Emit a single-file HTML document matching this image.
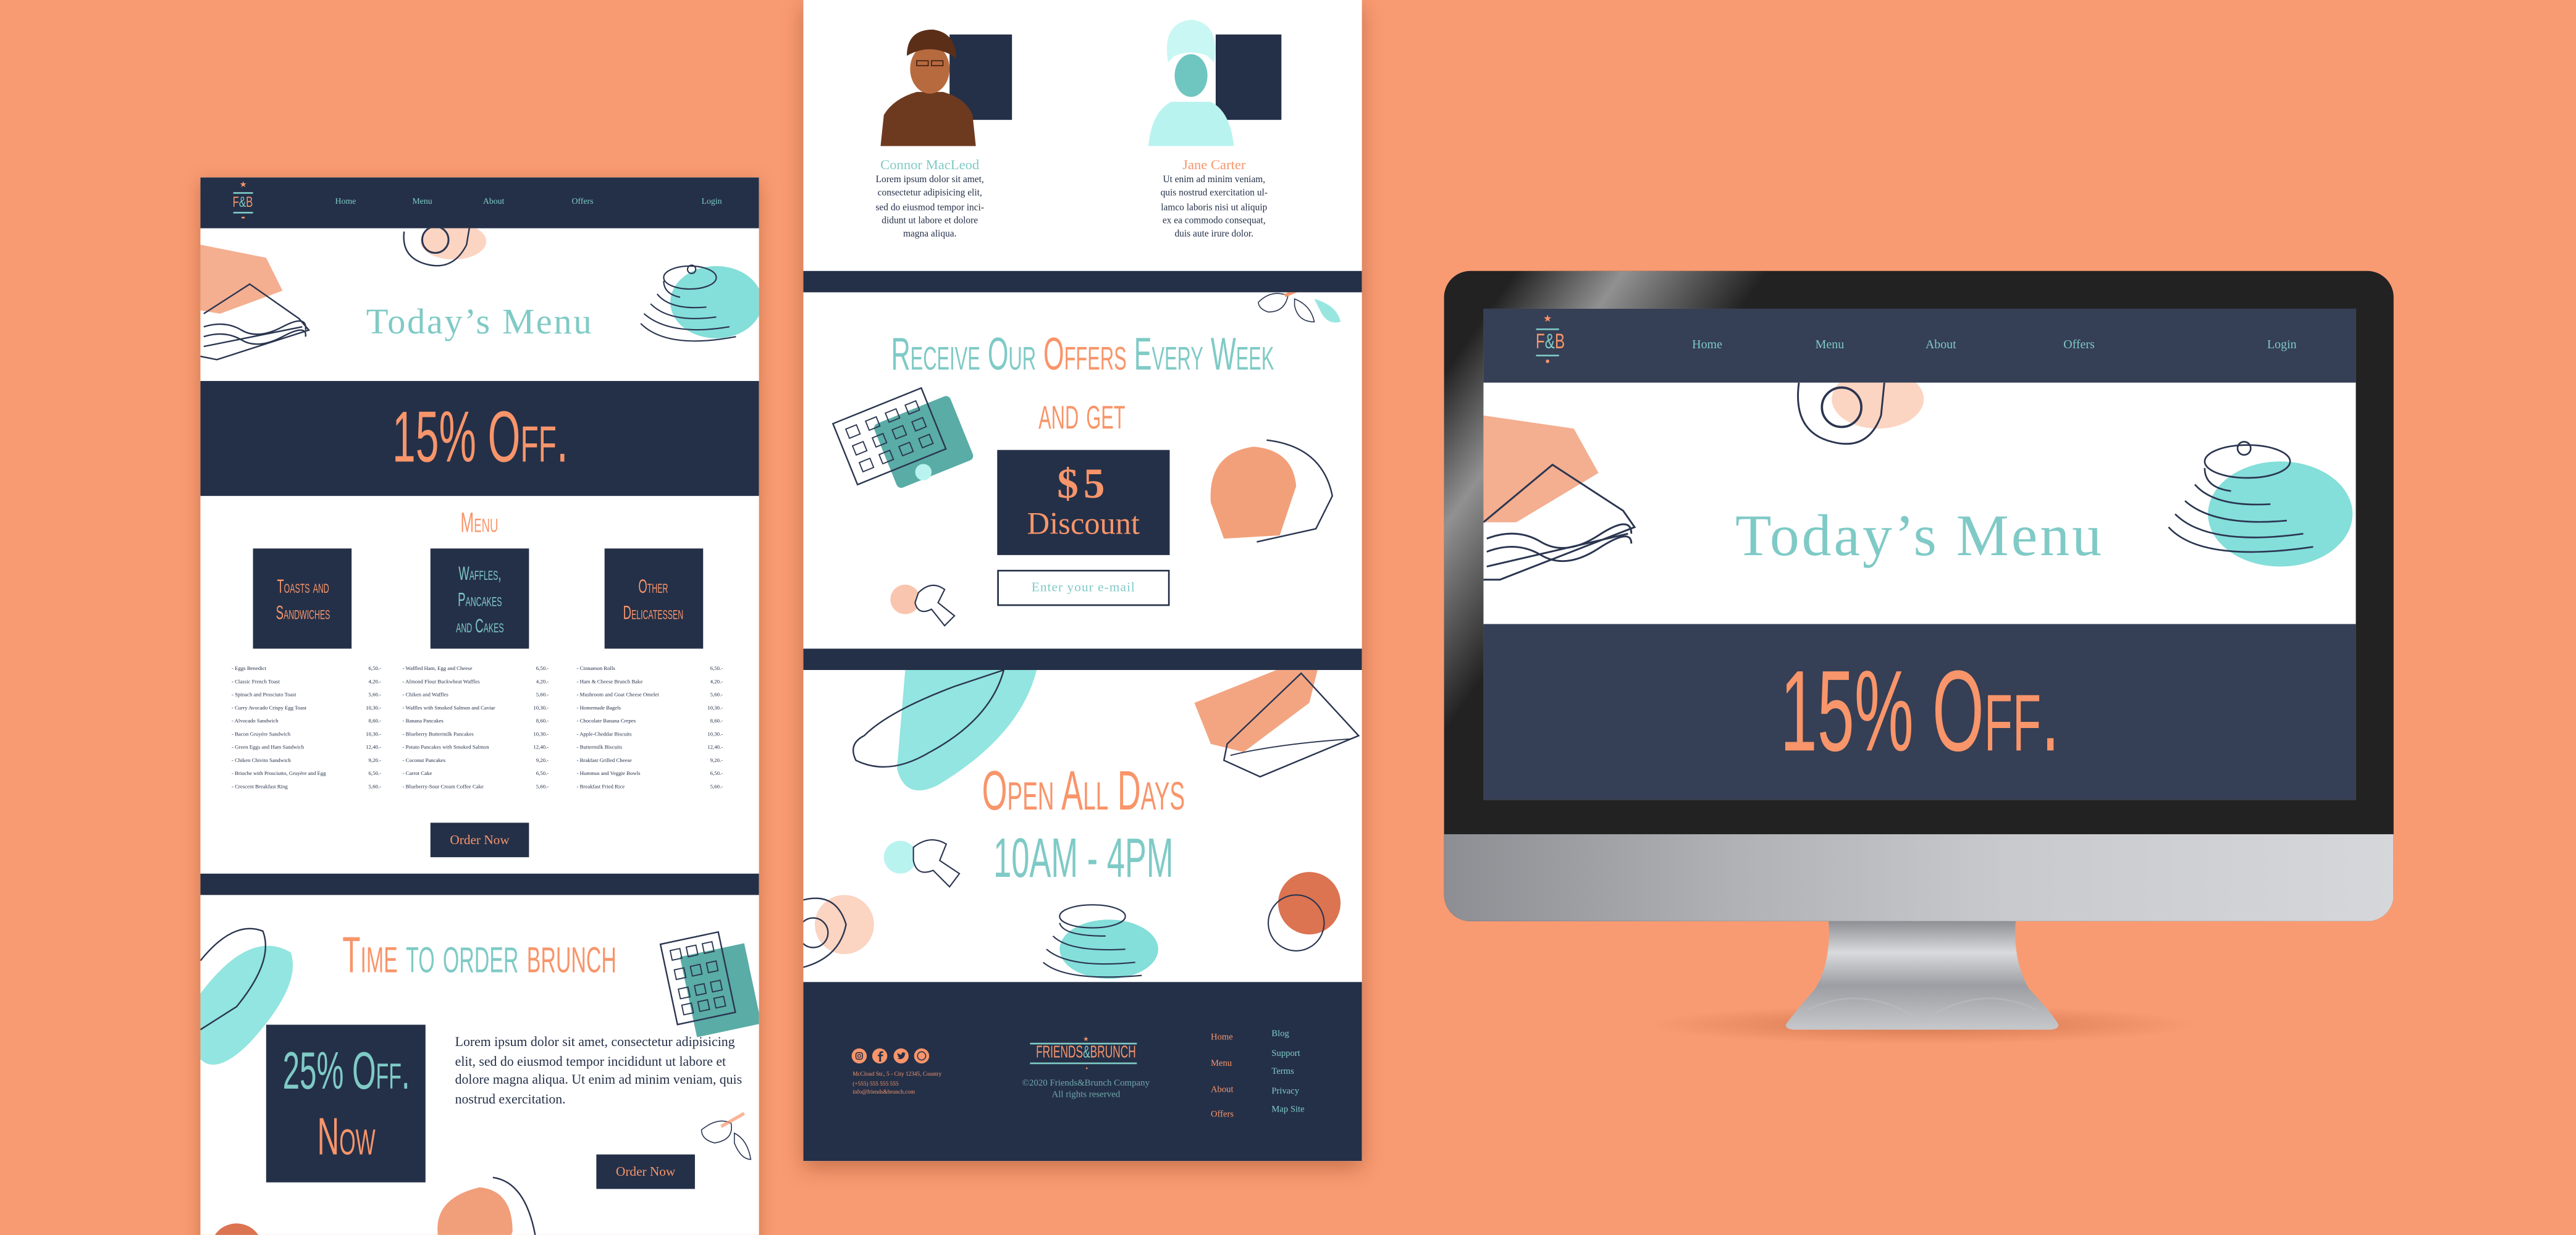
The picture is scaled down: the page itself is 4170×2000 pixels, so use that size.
<!DOCTYPE html>
<html><head><meta charset="utf-8">
<style>
html,body{margin:0;padding:0;}
body{width:4170px;height:2000px;overflow:hidden;background:#f99b72;}
#s{position:absolute;left:0;top:0;width:1568px;height:752px;transform:scale(2.6594);transform-origin:0 0;background:#f99b72;overflow:hidden;}
.a{position:absolute;}
.navy{background:#243048;}
.serif{font-family:"Liberation Serif",serif;}
.hand{font-family:"Liberation Sans",sans-serif;font-variant:small-caps;white-space:nowrap;}
.sq{display:inline-block;transform:scaleX(.58);transform-origin:50% 50%;white-space:nowrap;}
.teal{color:#7fcac6;}
.or{color:#f8956a;}
.c{text-align:center;}
.nav{font-family:"Liberation Serif",serif;font-size:5.2px;color:#7fcac6;}
.list{font-family:"Liberation Serif",serif;font-size:3.3px;color:#243048;line-height:8.05px;white-space:nowrap;}
.box{background:#243048;display:flex;align-items:center;justify-content:center;text-align:center;}
</style></head><body>
<div id="s">

<!-- ================= LEFT PANEL ================= -->
<div class="a" style="left:122px;top:108px;width:340px;height:660px;background:#fff;box-shadow:0 3px 10px rgba(120,50,20,.35);overflow:hidden;">
  <div class="a navy" style="left:0;top:0;width:340px;height:31px;"></div>
  <div class="a" style="left:16px;top:3px;width:20px;height:26px;">
    <div class="a or c" style="left:0;top:0;width:20px;font-size:5px;line-height:5px;">★</div>
    <div class="a" style="left:4px;top:6px;width:12px;height:.8px;background:#7fcac6;"></div>
    <div class="a c" style="left:0;top:7px;width:20px;font-family:'Liberation Sans',sans-serif;font-size:9px;line-height:10px;"><span class="sq" style="transform:scaleX(.7)"><span class="or">F</span><span class="teal">&amp;</span><span class="or">B</span></span></div>
    <div class="a" style="left:4px;top:18px;width:12px;height:.8px;background:#7fcac6;"></div>
    <div class="a" style="left:9.3px;top:20.5px;width:1.4px;height:1.4px;border-radius:50%;background:#f8956a;"></div>
  </div>
  <div class="a nav" style="left:82px;top:12px;">Home</div>
  <div class="a nav" style="left:129px;top:12px;">Menu</div>
  <div class="a nav" style="left:172px;top:12px;">About</div>
  <div class="a nav" style="left:226px;top:12px;">Offers</div>
  <div class="a nav or" style="left:305px;top:12px;">Login</div>

  <svg class="a" style="left:0;top:31px;" width="340" height="93" viewBox="0 0 340 93">
    <polygon points="0,10 40,18 50,38 12,52 0,50" fill="#f2a07c" opacity=".85"/>
    <g stroke="#2a3550" stroke-width=".9" fill="none">
      <path d="M2,52 L30,34 L60,55 L66,62 L10,80 L0,78"/>
      <path d="M2,60 Q15,56 25,62 T50,60 T64,62"/>
      <path d="M2,66 Q15,62 25,68 T50,66 T64,66"/>
      <path d="M2,72 L62,60"/>
    </g>
    <g transform="translate(124,0)">
      <ellipse cx="30" cy="8" rx="20" ry="11" fill="#f8b79a" opacity=".6"/>
      <path d="M0,2 Q-2,18 14,22 Q30,26 38,10 L40,-2" stroke="#2a3550" stroke-width=".9" fill="none"/>
      <circle cx="19" cy="7" r="8" stroke="#2a3550" stroke-width="1.1" fill="none"/>
    </g>
    <g transform="translate(266,10)">
      <ellipse cx="48" cy="35" rx="28" ry="22" fill="#6fd8d2" opacity=".85"/>
      <g stroke="#2a3550" stroke-width=".8" fill="none">
        <ellipse cx="32" cy="20" rx="16" ry="7"/>
        <path d="M16,22 Q16,30 26,32 M12,30 Q20,40 42,38 M8,36 Q20,48 48,44 M4,42 Q20,56 56,50 M2,48 Q18,64 60,56"/>
        <circle cx="33" cy="15" r="2.5"/>
      </g>
    </g>
  </svg>
  <div class="a serif teal c" style="left:0;top:75px;width:340px;font-size:22px;line-height:26px;letter-spacing:1px;">Today’s Menu</div>

  <div class="a navy" style="left:0;top:124px;width:340px;height:70px;"></div>
  <div class="a hand or c" style="left:-200px;top:134px;width:740px;font-size:44px;line-height:50px;"><span class="sq">15% Off.</span></div>

  <div class="a hand or c" style="left:-200px;top:201px;width:740px;font-size:17px;line-height:20px;"><span class="sq">Menu</span></div>
  <div class="a box hand or" style="left:32px;top:226px;width:60px;height:61px;font-size:12px;line-height:16px;"><span class="sq">Toasts and<br>Sandwiches</span></div>
  <div class="a box hand teal" style="left:140px;top:226px;width:60px;height:61px;font-size:12px;line-height:16px;"><span class="sq">Waffles,<br>Pancakes<br>and Cakes</span></div>
  <div class="a box hand or" style="left:246px;top:226px;width:60px;height:61px;font-size:12px;line-height:16px;"><span class="sq">Other<br>Delicatessen</span></div>

  <div class="a list" style="left:19px;top:295px;">- Eggs Benedict<br>- Classic French Toast<br>- Spinach and Prosciuto Toast<br>- Curry Avocado Crispy Egg Toast<br>- Alvocado Sandwich<br>- Bacon Gruyére Sandwich<br>- Green Eggs and Ham Sandwich<br>- Chiken Chivito Sandwich<br>- Brioche with Prosciutto, Gruyère and Egg<br>- Crescent Breakfast Ring</div>
  <div class="a list" style="left:92px;top:295px;text-align:right;width:18px;">6,50.-<br>4,20.-<br>5,60.-<br>10,30.-<br>8,60.-<br>10,30.-<br>12,40.-<br>9,20.-<br>6,50.-<br>5,60.-</div>
  <div class="a list" style="left:123px;top:295px;">- Waffled Ham, Egg and Cheese<br>- Almond Flour Buckwheat Waffles<br>- Chiken and Waffles<br>- Waffles with Smoked Salmon and Caviar<br>- Banana Pancakes<br>- Blueberry Buttermilk Pancakes<br>- Potato Pancakes with Smoked Salmon<br>- Coconut Pancakes<br>- Carrot Cake<br>- Blueberry-Sour Cream Coffee Cake</div>
  <div class="a list" style="left:194px;top:295px;text-align:right;width:18px;">6,50.-<br>4,20.-<br>5,60.-<br>10,30.-<br>8,60.-<br>10,30.-<br>12,40.-<br>9,20.-<br>6,50.-<br>5,60.-</div>
  <div class="a list" style="left:229px;top:295px;">- Cinnamon Rolls<br>- Ham &amp; Cheese Brunch Bake<br>- Mushroom and Goat Cheese Omelet<br>- Homemade Bagels<br>- Chocolate Banana Crepes<br>- Apple-Cheddar Biscuits<br>- Buttermilk Biscuits<br>- Brakfast Grilled Cheese<br>- Hummus and Veggie Bowls<br>- Breakfast Fried Rice</div>
  <div class="a list" style="left:300px;top:295px;text-align:right;width:18px;">6,50.-<br>4,20.-<br>5,60.-<br>10,30.-<br>8,60.-<br>10,30.-<br>12,40.-<br>9,20.-<br>6,50.-<br>5,60.-</div>

  <div class="a box serif or" style="left:140px;top:393px;width:60px;height:21px;font-size:8px;">Order Now</div>

  <div class="a navy" style="left:0;top:424px;width:340px;height:13px;"></div>

  <svg class="a" style="left:0;top:437px;" width="340" height="230" viewBox="0 0 340 230">
    <path d="M0,60 Q30,20 55,35 Q62,55 30,90 Q10,110 0,100Z" fill="#7fe0da" opacity=".85"/>
    <path d="M0,40 Q20,15 38,22 Q45,40 22,68 L0,82" stroke="#2a3550" stroke-width=".9" fill="none"/>
    <g transform="translate(280,30) rotate(-12)">
      <rect x="10" y="10" width="40" height="50" fill="#3d9e97" opacity=".85"/>
      <rect x="0" y="0" width="36" height="50" fill="none" stroke="#2a3550" stroke-width=".9"/>
      <g stroke="#2a3550" stroke-width=".7" fill="none">
        <rect x="5" y="5" width="6" height="6"/><rect x="15" y="5" width="6" height="6"/><rect x="25" y="5" width="6" height="6"/>
        <rect x="5" y="17" width="6" height="6"/><rect x="15" y="17" width="6" height="6"/><rect x="25" y="17" width="6" height="6"/>
        <rect x="5" y="29" width="6" height="6"/><rect x="15" y="29" width="6" height="6"/><rect x="25" y="29" width="6" height="6"/>
        <rect x="5" y="39" width="6" height="6"/><rect x="15" y="39" width="6" height="6"/><rect x="25" y="39" width="6" height="6"/>
      </g>
    </g>
    <g transform="translate(305,135)" stroke="#2a3550" stroke-width=".6" fill="none">
      <path d="M0,8 Q10,0 18,4 Q20,14 8,16 Q0,14 0,8Z"/><path d="M20,10 Q28,14 30,26 Q24,26 20,16Z"/>
      <path d="M12,6 L26,-2" stroke="#f8956a" stroke-width="2" opacity=".7"/>
    </g>
    <g transform="translate(140,170)">
      <path d="M5,40 Q0,15 30,8 Q50,10 50,35 L40,60 L5,60Z" fill="#ee8d63" opacity=".85"/>
      <path d="M38,2 Q60,5 65,45 L55,60 L28,60" stroke="#2a3550" stroke-width=".9" fill="none"/>
    </g>
    <circle cx="22" cy="216" r="16" fill="#d8643e" opacity=".9"/>
  </svg>
  <div class="a hand c" style="left:-200px;top:456px;width:740px;font-size:31px;line-height:36px;"><span class="sq"><span class="or">Time</span> <span class="teal">to order</span> <span class="or">brunch</span></span></div>
  <div class="a box hand" style="left:40px;top:516px;width:97px;height:96px;font-size:32px;line-height:40px;"><span class="sq"><span class="teal">25% Off.</span><br><span class="or">Now</span></span></div>
  <div class="a serif" style="left:155px;top:521px;width:180px;font-size:8.2px;line-height:11.6px;color:#243048;">Lorem ipsum dolor sit amet, consectetur adipisicing elit, sed do eiusmod tempor incididunt ut labore et dolore magna aliqua. Ut enim ad minim veniam, quis nostrud exercitation.</div>
  <div class="a box serif or" style="left:241px;top:595px;width:60px;height:21px;font-size:8px;">Order Now</div>
</div>

<!-- ================= MIDDLE PANEL ================= -->
<div class="a" style="left:489px;top:0;width:340px;height:707px;background:#fff;box-shadow:0 4px 12px rgba(120,50,20,.4);overflow:hidden;">
  <div class="a navy" style="left:89px;top:21px;width:38px;height:52px;"></div>
  <svg class="a" style="left:47px;top:12px;" width="60" height="77" viewBox="0 0 60 77">
    <path d="M0,77 L2,58 Q8,48 22,44 L38,44 Q52,48 56,58 L58,77Z" fill="#6e3a1f"/>
    <ellipse cx="30" cy="30" rx="12" ry="15" fill="#b86a3f"/>
    <path d="M16,22 Q16,6 32,6 Q46,8 46,24 L44,22 Q30,14 16,22Z" fill="#5b2e18"/>
    <rect x="22" y="25" width="7" height="3" fill="none" stroke="#3a1d0f" stroke-width=".6"/><rect x="31" y="25" width="7" height="3" fill="none" stroke="#3a1d0f" stroke-width=".6"/>
  </svg>
  <div class="a navy" style="left:251px;top:21px;width:40px;height:52px;"></div>
  <svg class="a" style="left:208px;top:8px;" width="56" height="81" viewBox="0 0 56 81">
    <path d="M2,81 Q4,60 16,54 L40,54 Q52,60 54,81Z" fill="#b9f3ef"/>
    <ellipse cx="28" cy="38" rx="10" ry="13" fill="#6fc6c0"/>
    <path d="M14,30 Q10,6 28,4 Q46,6 42,30 L38,26 Q28,22 18,26Z" fill="#c9f7f3"/>
  </svg>
  <div class="a serif teal c" style="left:27px;top:95px;width:100px;font-size:8.5px;">Connor MacLeod</div>
  <div class="a serif c" style="left:17px;top:106px;width:120px;font-size:5.8px;line-height:8.3px;color:#243048;">Lorem ipsum dolor sit amet,<br>consectetur adipisicing elit,<br>sed do eiusmod tempor inci-<br>didunt ut labore et dolore<br>magna aliqua.</div>
  <div class="a serif or c" style="left:200px;top:95px;width:100px;font-size:8.5px;">Jane Carter</div>
  <div class="a serif c" style="left:190px;top:106px;width:120px;font-size:5.8px;line-height:8.3px;color:#243048;">Ut enim ad minim veniam,<br>quis nostrud exercitation ul-<br>lamco laboris nisi ut aliquip<br>ex ea commodo consequat,<br>duis aute irure dolor.</div>

  <div class="a navy" style="left:0;top:165px;width:340px;height:13px;"></div>

  <svg class="a" style="left:0;top:178px;" width="340" height="217" viewBox="0 0 340 217">
    <g transform="translate(275,0)" stroke="#2a3550" stroke-width=".6" fill="none">
      <path d="M2,6 Q10,-2 20,2 Q18,12 8,12 Q2,10 2,6Z"/><path d="M24,4 Q34,8 36,18 Q26,18 24,8Z"/>
      <path d="M36,4 Q50,8 52,18 Q44,20 40,12Z" fill="#7fe0da" stroke="none" opacity=".8"/>
      <path d="M18,2 L28,-2" stroke="#f8956a" stroke-width="2"/>
    </g>
    <g transform="translate(18,80) rotate(-22)">
      <rect x="22" y="10" width="50" height="42" rx="3" fill="#3d9e97" opacity=".85"/>
      <rect x="0" y="0" width="58" height="40" fill="none" stroke="#2a3550" stroke-width=".9"/>
      <g stroke="#2a3550" stroke-width=".7" fill="none">
        <rect x="6" y="6" width="7" height="6"/><rect x="19" y="6" width="7" height="6"/><rect x="32" y="6" width="7" height="6"/><rect x="45" y="6" width="7" height="6"/>
        <rect x="6" y="17" width="7" height="6"/><rect x="19" y="17" width="7" height="6"/><rect x="32" y="17" width="7" height="6"/><rect x="45" y="17" width="7" height="6"/>
        <rect x="6" y="28" width="7" height="6"/><rect x="19" y="28" width="7" height="6"/><rect x="32" y="28" width="7" height="6"/><rect x="45" y="28" width="7" height="6"/>
      </g>
      <circle cx="40" cy="48" r="5" fill="#b9f3ef"/>
    </g>
    <g transform="translate(246,88)">
      <path d="M2,40 Q0,10 28,6 Q52,8 54,30 L44,60 L10,62Z" fill="#f08f63" opacity=".85"/>
      <path d="M36,2 Q70,6 76,36 L66,56 L30,64" stroke="#2a3550" stroke-width=".9" fill="none"/>
    </g>
    <g transform="translate(52,175)">
      <circle cx="10" cy="12" r="9" fill="#f8b79a" opacity=".8"/>
      <path d="M18,8 Q26,0 34,6 L30,14 L40,22 L34,28 L26,18 Q18,22 16,14Z" stroke="#2a3550" stroke-width=".8" fill="#fff"/>
    </g>
  </svg>
  <div class="a hand c" style="left:-200px;top:200px;width:740px;font-size:28px;line-height:32px;"><span class="sq"><span class="teal">Receive Our</span> <span class="or">Offers</span> <span class="teal">Every Week</span></span></div>
  <div class="a hand or c" style="left:-200px;top:236px;width:740px;font-size:28px;line-height:32px;"><span class="sq">and get</span></div>
  <div class="a box serif or" style="left:118px;top:274px;width:105px;height:64px;"><div><div style="font-size:26px;line-height:28px;font-weight:bold;letter-spacing:3px;">$5</div><div style="font-size:19px;line-height:22px;">Discount</div></div></div>
  <div class="a serif teal" style="left:118px;top:347px;width:103px;height:20px;border:1px solid #243048;font-size:8px;line-height:20px;text-align:center;letter-spacing:.4px;">Enter your e-mail</div>

  <div class="a navy" style="left:0;top:395px;width:340px;height:13px;"></div>

  <svg class="a" style="left:0;top:408px;" width="340" height="190" viewBox="0 0 340 190">
    <g transform="translate(22,0)">
      <path d="M40,0 L120,0 Q110,40 60,70 Q40,80 35,60 Z" fill="#7fe0da" opacity=".85"/>
      <path d="M15,40 Q30,25 70,10 L100,0 Q92,30 55,50 Q30,65 10,55 Q5,45 15,40Z" stroke="#2a3550" stroke-width=".9" fill="none"/>
    </g>
    <g transform="translate(228,0)">
      <path d="M10,20 L60,0 L85,0 L80,20 L40,50 L20,45Z" fill="#f08f63" opacity=".8"/>
      <path d="M30,45 L75,2 L110,40 L50,65 L28,55Z" stroke="#2a3550" stroke-width=".9" fill="none"/>
      <path d="M32,52 Q60,45 105,42" stroke="#2a3550" stroke-width=".7" fill="none"/>
    </g>
    <g transform="translate(47,100)">
      <circle cx="12" cy="14" r="10" fill="#b9f3ef"/>
      <path d="M20,8 Q30,0 40,6 L36,16 L48,24 L42,32 L32,22 Q22,26 20,16Z" stroke="#2a3550" stroke-width=".8" fill="#fff"/>
    </g>
    <g transform="translate(0,135)">
      <circle cx="25" cy="20" r="18" fill="#f8b79a" opacity=".6"/>
      <path d="M0,5 Q20,0 26,20 Q22,40 0,46" stroke="#2a3550" stroke-width=".9" fill="none"/>
      <circle cx="6" cy="25" r="9" stroke="#2a3550" stroke-width=".9" fill="none"/>
    </g>
    <g transform="translate(144,140)">
      <ellipse cx="42" cy="30" rx="30" ry="18" fill="#6fd8d2" opacity=".85"/>
      <g stroke="#2a3550" stroke-width=".8" fill="none">
        <ellipse cx="32" cy="10" rx="20" ry="7"/>
        <path d="M12,14 Q14,22 40,22 M8,22 Q18,32 52,30 M4,30 Q18,42 58,38 M2,38 Q16,50 62,46"/>
      </g>
    </g>
    <g transform="translate(278,120)">
      <circle cx="30" cy="22" r="19" fill="#d8643e" opacity=".9"/>
      <circle cx="22" cy="34" r="17" stroke="#2a3550" stroke-width=".8" fill="none"/>
    </g>
  </svg>
  <div class="a hand or c" style="left:-200px;top:463px;width:740px;font-size:34px;line-height:38px;"><span class="sq">Open All Days</span></div>
  <div class="a hand teal c" style="left:-200px;top:504px;width:740px;font-size:34px;line-height:38px;font-variant:normal;"><span class="sq">10AM - 4PM</span></div>

  <div class="a navy" style="left:0;top:598px;width:340px;height:109px;"></div>
  <svg class="a" style="left:29px;top:638px;" width="50" height="10" viewBox="0 0 50 10">
    <g fill="#f8956a"><circle cx="5" cy="5" r="4.6"/><circle cx="17.5" cy="5" r="4.6"/><circle cx="30.5" cy="5" r="4.6"/><circle cx="43" cy="5" r="4.6"/></g>
    <rect x="3" y="3" width="4" height="4" rx="1.2" fill="none" stroke="#243048" stroke-width=".6"/><circle cx="5" cy="5" r=".9" fill="none" stroke="#243048" stroke-width=".5"/>
    <path d="M18.3,8.5 V5.2 H19.4 L19.6,4.2 H18.3 V3.6 Q18.3,3.1 18.8,3.1 H19.6 V2.2 H18.6 Q17.2,2.2 17.2,3.5 V4.2 H16.3 V5.2 H17.2 V8.5Z" fill="#243048"/>
    <path d="M28.2,6.6 Q30,7.4 31.6,6.4 Q33,5.2 32.8,3.6 L33.4,3 L32.7,3.2 Q32.1,2.5 31.2,3 Q30.6,3.4 30.8,4.3 Q29.4,4.2 28.4,3.1 Q28,4.4 29,5.2 L28.6,5.1 Q28.8,6 29.7,6.2 Q29,6.6 28.2,6.6Z" fill="#243048"/>
    <circle cx="43" cy="5" r="2.5" fill="none" stroke="#243048" stroke-width=".6"/>
  </svg>
  <div class="a serif or" style="left:30px;top:652px;font-size:3.5px;line-height:5.5px;white-space:nowrap;">McCloud Str., 5 - City 12345, Country<br>(+555) 555 555 555<br>info@friends&amp;brunch.com</div>
  <div class="a or c" style="left:127px;top:631px;width:90px;font-size:4px;line-height:4px;">★</div>
  <div class="a" style="left:138px;top:635px;width:65px;height:.8px;background:#7fcac6;"></div>
  <div class="a c" style="left:72px;top:635px;width:200px;font-family:'Liberation Sans',sans-serif;font-size:10.5px;line-height:12px;white-space:nowrap;"><span class="sq" style="transform:scaleX(.62)"><span class="or">FRIENDS</span><span class="teal">&amp;</span><span class="or">BRUNCH</span></span></div>
  <div class="a" style="left:138px;top:647px;width:65px;height:.8px;background:#7fcac6;"></div>
  <div class="a" style="left:171.5px;top:649.5px;width:1.2px;height:1.2px;border-radius:50%;background:#f8956a;"></div>
  <div class="a serif c" style="left:117px;top:657px;width:110px;font-size:5.6px;line-height:7.2px;color:#6fa7a9;">©2020 Friends&amp;Brunch Company<br>All rights reserved</div>
  <div class="a serif or" style="left:248px;top:625px;font-size:5.5px;line-height:15.8px;">Home<br>Menu<br>About<br>Offers</div>
  <div class="a serif teal" style="left:285px;top:625px;font-size:5.5px;line-height:11.6px;">Blog<br>Support<br>Terms<br>Privacy<br>Map Site</div>
</div>

<!-- ================= MONITOR ================= -->
<div class="a" style="left:1000px;top:612px;width:340px;height:24px;border-radius:50%;background:radial-gradient(ellipse at center,rgba(180,90,50,.55),rgba(249,155,114,0) 70%);"></div>
<svg class="a" style="left:1075px;top:560px;" width="190" height="70" viewBox="0 0 190 70">
  <defs>
    <linearGradient id="ng" x1="0" y1="0" x2="0" y2="1"><stop offset="0" stop-color="#8a8c91"/><stop offset=".3" stop-color="#d9dadd"/><stop offset=".6" stop-color="#9c9ea3"/><stop offset="1" stop-color="#c7c8cb"/></linearGradient>
  </defs>
  <path d="M38,0 L152,0 Q150,25 160,42 Q175,58 178,64 Q178,67 172,67 L18,67 Q12,67 12,64 Q16,58 30,42 Q40,25 38,0Z" fill="url(#ng)"/>
  <path d="M25,55 Q60,38 95,62 Q130,38 165,55" stroke="#bcbdc1" stroke-width="1" fill="none" opacity=".6"/>
</svg>
<div class="a" style="left:879px;top:165px;width:578px;height:396px;border-radius:16px;overflow:hidden;background:#232223;">
  <div class="a" style="left:0;top:343px;width:578px;height:53px;background:linear-gradient(90deg,#8d8e93 0%,#b0b1b5 30%,#c9cace 60%,#d6d7da 100%);"></div>
  <div class="a" style="left:0;top:0;width:200px;height:340px;background:linear-gradient(125deg,rgba(255,255,255,0) 10%,rgba(255,255,255,.5) 25%,rgba(255,255,255,0) 45%);"></div>
  <div class="a" style="left:24px;top:23px;width:531px;height:299px;background:#fff;overflow:hidden;">
    <div class="a" style="left:0;top:0;width:531px;height:45px;background:#353f55;"></div>
    <div class="a" style="left:28px;top:4px;width:22px;height:36px;">
      <div class="a or c" style="left:0;top:0;width:22px;font-size:6px;line-height:6px;">★</div>
      <div class="a" style="left:4px;top:8px;width:14px;height:1px;background:#7fcac6;"></div>
      <div class="a c" style="left:0;top:9px;width:22px;font-family:'Liberation Sans',sans-serif;font-size:13px;line-height:14px;white-space:nowrap;"><span class="sq" style="transform:scaleX(.7)"><span class="or">F</span><span class="teal">&amp;</span><span class="or">B</span></span></div>
      <div class="a" style="left:4px;top:24px;width:14px;height:1px;background:#7fcac6;"></div>
      <div class="a" style="left:10px;top:27px;width:1.6px;height:1.6px;border-radius:50%;background:#f8956a;"></div>
    </div>
    <div class="a nav" style="left:127px;top:17px;font-size:7.5px;">Home</div>
    <div class="a nav" style="left:202px;top:17px;font-size:7.5px;">Menu</div>
    <div class="a nav" style="left:269px;top:17px;font-size:7.5px;">About</div>
    <div class="a nav" style="left:353px;top:17px;font-size:7.5px;">Offers</div>
    <div class="a nav or" style="left:477px;top:17px;font-size:7.5px;">Login</div>
    <svg class="a" style="left:0;top:45px;" width="531" height="147" viewBox="0 0 531 147">
      <polygon points="0,20 55,28 70,55 20,85 0,85" fill="#f2a07c" opacity=".85"/>
      <g stroke="#2a3550" stroke-width="1.1" fill="none">
        <path d="M0,85 L42,50 L85,78 L92,88 L10,120 L0,120"/>
        <path d="M2,95 Q20,88 35,97 T70,93 T90,92"/>
        <path d="M2,103 Q20,96 35,105 T70,101 T90,98"/>
        <path d="M2,112 L88,92"/>
      </g>
      <g transform="translate(190,0)">
        <ellipse cx="50" cy="10" rx="28" ry="18" fill="#f8b79a" opacity=".6"/>
        <path d="M2,0 Q-2,30 22,36 Q44,42 52,20 L54,0" stroke="#2a3550" stroke-width="1.1" fill="none"/>
        <circle cx="28" cy="15" r="12" stroke="#2a3550" stroke-width="1.4" fill="none"/>
      </g>
      <g transform="translate(415,30)">
        <ellipse cx="70" cy="50" rx="44" ry="32" fill="#6fd8d2" opacity=".85"/>
        <g stroke="#2a3550" stroke-width="1" fill="none">
          <ellipse cx="50" cy="18" rx="26" ry="10"/>
          <path d="M24,22 Q24,34 40,36 M18,32 Q30,46 64,44 M12,42 Q30,58 74,54 M6,50 Q26,70 84,62 M2,58 Q22,80 90,70"/>
          <circle cx="48" cy="10" r="4"/>
        </g>
      </g>
    </svg>
    <div class="a serif teal c" style="left:0;top:117px;width:531px;font-size:36px;line-height:42px;letter-spacing:1.5px;">Today’s Menu</div>
    <div class="a" style="left:0;top:192px;width:531px;height:107px;background:#353f55;"></div>
    <div class="a hand or c" style="left:-100px;top:205px;width:731px;font-size:70px;line-height:80px;"><span class="sq">15% Off.</span></div>
  </div>
</div>

</div>
</body></html>
